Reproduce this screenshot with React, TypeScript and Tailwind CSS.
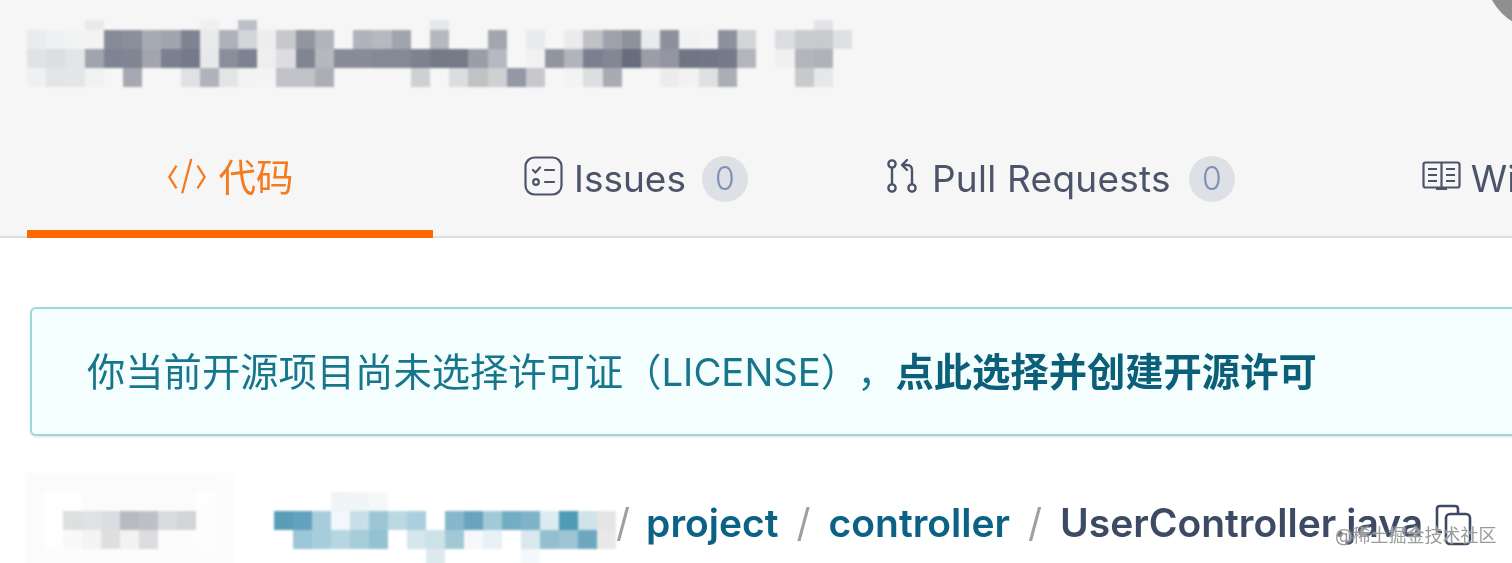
import React from "react";

const sans = "font-['Inter','Noto_Sans_CJK_SC',sans-serif]";

const titleRows = [
  { h: 10, c: ". . . e8e9ea . . . . . eeeff0 . bcbfc6 . . . . . . . . . e4e6e8 . . . . . . . . . . . . . . . . . . . e2e3e6" },
  { h: 19, c: "e9ebec eef0f1 f2f3f3 f3f3f4 858b98 8a8f9b a7abb4 a0a4ae 7e8492 e8eaec aeb1b9 d3d5d9 ededee c6c8cc 9296a0 b1b4ba . b0b3bb b7b9c0 a0a4ad . b5b8bd . . a3a6ae . e8e9ea . ebebec bfc1c5 9fa2ab 8e929c e9eaec 8e919c f2f2f3 f4f4f4 8d919d d3d5d8 . dcdde0 c9cbcf c8cace dfe0e3" },
  { h: 19, c: "e0e2e5 dcdee1 e2e4e6 a0a4ac 7e8493 7f8593 a2a5af 7b8090 747a8a e7e8ea 8a8e9c 7c8292 eeeeef dcdde0 808592 b5b8be 878b98 888c99 858997 858997 7d8290 757a89 767a89 9a9ea8 b6b9c1 . f1f1f2 9195a0 b2b4bb 7b8090 838794 676c7e 9b9ea8 9396a2 707586 727788 747a89 b3b5bc . f0f0f1 b3b5bc afb2b8" },
  { h: 19, c: "eff0f1 e2e4e6 e3e5e7 f1f1f2 . a5a8b2 . . e0e1e3 b0b3bb e2e4e5 f3f3f3 f4f4f4 c0c2c7 c0c2c7 acaeb4 . . . . cfd0d2 . dcdddf c0c2c6 ced0d2 9498a4 c6c8cc . f3f3f3 dcdee0 a8abb3 . . ececed f2f2f2 dfe0e2 abaeb5 . . . c7c9cc e6e7e8" },
];

const avatarRows = [
  { h: 19, c: "fbfbfb fbfbfb fbfbfb fbfbfb fbfbfb fbfbfb fbfbfb fbfbfb fbfbfb fbfbfb fcfcfc" },
  { h: 19, c: "fbfbfb fefefe fefefe fbfbfb fbfbfb fbfbfb fbfbfb fbfbfb fbfbfb fefefe fbfbfb" },
  { h: 19, c: "fbfbfb fefefe dedfe0 e0e1e2 dcdde0 b8bac2 bec0c6 dadbdd d3d4d6 fdfdfd fbfbfb" },
  { h: 19, c: "fbfbfb fefefe f9f9f9 f4f4f5 dedfe1 f2f2f3 dcdcde fcfcfc fcfcfc fdfdfd fbfbfb" },
  { h: 19, c: "fbfbfb fcfcfc fcfcfc fcfcfc fcfcfc fcfcfc fcfcfc fcfcfc fcfcfc fcfcfc fcfcfc" },
];

const repoRows = [
  { h: 19, c: ". . . eff4f6 f1f5f7 f5f8f9" },
  { h: 19, c: "5b9db8 62a2bc a7cddb f1f7fa c7dfe7 9cc6d6 bcd9e3 abcfdc . 85b8cc 68a4bd a1c9d8 73adc4 7eb3c8 dcebf0 4f9ab5 cfe3ea e5e5e5" },
  { h: 19, c: ". 9cc7d8 a6cddc b6d6e1 a6ccda 94c2d3 . d5e6ed cde1e9 a2c8d6 f6f9fb e8f1f5 . d9e7ee 94bfd0 9cc4d3 6ea8c0 e8e8e8" },
  { h: 19, c: ". . . . . . . . dce9ef . . . . f4f8fa" },
];

const Mosaic = ({ rows, className, cell = "w-[19px]" }: { rows: { h: number; c: string }[]; className?: string; cell?: string }) => (
  <div className={`flex flex-col shrink-0 ${className ?? ""}`}>
    {rows.map((row, i) => (
      <div key={i} className="flex">
        {row.c.split(" ").map((color, j) => (
          <div
            key={j}
            className={`${cell} shrink-0`}
            style={{ height: row.h, background: color === "." ? "transparent" : `#${color}` }}
          />
        ))}
      </div>
    ))}
  </div>
);

const Badge = () => (
  <span className="ml-[16px] flex h-[46px] w-[46px] items-center justify-center rounded-full bg-[#dde0e4] text-[32px] font-light text-[#7d91b4]">
    0
  </span>
);

const App: React.FC = () => {
  return (
    <div className={`relative h-[563px] w-[1512px] overflow-hidden bg-white blur-[0.5px] ${sans}`}>
      <div className="absolute left-[1484px] top-[-91px] h-[122px] w-[122px] rounded-full bg-[#8f8f8f]" />

      <section className="h-[238px] bg-[#f6f6f6] pt-[20px]">
        <Mosaic rows={titleRows} cell="w-[19.2px]" className="ml-[27px] blur-[1px]" />
        <div className="flex h-[151px] border-b-2 border-[#dedede] pl-[27px] text-[37px] text-[#4b5468]">
          <div className="flex h-[151px] w-[406px] shrink-0 items-center justify-center border-b-8 border-[#ff6a00] pt-[40px] text-[#f57a1e]">
            <svg className="mr-[12px] mt-[-4px] h-[42px] w-[40px]" viewBox="0 0 40 44" fill="none" stroke="currentColor" strokeWidth="2.4">
              <path d="M9 10 1.5 22 9 34M31 10l7.5 12L31 34M24.5 3 15 39" />
            </svg>
            <span className="text-[37.5px]">代码</span>
          </div>

          <div className="ml-[91px] flex h-[151px] shrink-0 items-center border-b-8 border-transparent pt-[40px]">
            <svg className="mr-[11px] mt-[-6px] h-[40px] w-[39px]" viewBox="0 0 39 40" fill="none" stroke="#4b5468" strokeWidth="2.2" strokeLinecap="round">
              <rect x="1.5" y="1.5" width="36" height="37" rx="9" />
              <path d="m9 14 2.5 2.5 4.5-5M21 14h9M21 26h9" />
              <circle cx="12" cy="26" r="2.8" />
            </svg>
            <span>Issues</span>
            <Badge />
          </div>

          <div className="ml-[138px] flex h-[151px] shrink-0 items-center border-b-8 border-transparent pt-[40px]">
            <svg className="mr-[14px] mt-[-6px] h-[36px] w-[32px]" viewBox="0 0 32 36" fill="none" stroke="#4b5468" strokeWidth="2.4" strokeLinecap="round" strokeLinejoin="round">
              <circle cx="6" cy="6" r="3.6" />
              <circle cx="6" cy="30" r="3.6" />
              <circle cx="26" cy="30" r="3.6" />
              <path d="M6 10v16M26 26V12q0-5-5-5h-4M21 2l-5 5 5 5" />
            </svg>
            <span className="mr-[2px] tracking-[0.25px]">Pull Requests</span>
            <Badge />
          </div>

          <div className="ml-[187px] flex h-[151px] shrink-0 items-center border-b-8 border-transparent pt-[40px]">
            <svg className="mr-[10px] mt-[-6px] h-[30px] w-[39px] shrink-0" viewBox="0 0 39 30" fill="none" stroke="#4b5468" strokeWidth="2.2">
              <rect x="1.5" y="1.5" width="36" height="25" rx="2" />
              <path d="M19.5 2v25M6 8h9M6 14h9M6 20h9M24 8h9M24 14h9M24 20h9M14 28h11" />
            </svg>
            <span>Wi</span>
          </div>
        </div>
      </section>

      <main className="pt-[69px]">
        <div className="ml-[30px] flex h-[129px] w-[1600px] items-center rounded-md border-2 border-[#9fd8da] bg-[#f4fefe] pl-[55px] pt-[2px] text-[38.3px] text-[#17768b] shadow-sm">
          <span className="whitespace-nowrap">你当前开源项目尚未选择许可证（LICENSE）</span>
          <span className="ml-[-2px] whitespace-nowrap">，</span>
          <span className="whitespace-nowrap font-bold text-[#0b5f78]">点此选择并创建开源许可</span>
        </div>

        <div className="ml-[25px] mt-[37px] flex items-start">
          <Mosaic rows={avatarRows} className="blur-[1px]" />
          <Mosaic rows={repoRows} className="ml-[40px] mt-[19px] blur-[1px]" />
          <div className="flex h-[100px] items-center whitespace-nowrap text-[39px] font-semibold text-[#0b6285]">
            <span className="font-normal text-[#9f9f9f]">/</span>
            <span className="ml-[16px]">project</span>
            <span className="ml-[18px] font-normal text-[#9f9f9f]">/</span>
            <span className="ml-[18px]">controller</span>
            <span className="ml-[18px] font-normal text-[#9f9f9f]">/</span>
            <span className="ml-[18px] text-[#3d4a63]">UserController.java</span>
            <svg className="ml-[12px] mt-[4px] h-[42px] w-[37px] shrink-0" viewBox="0 0 37 42" fill="none" stroke="#3d4a63" strokeWidth="2.6">
              <path d="M7 28H5q-3 0-3-3V5q0-3 3-3h15q3 0 3 3v4" />
              <rect x="11" y="10" width="24" height="30" rx="4" />
            </svg>
          </div>
        </div>
      </main>

      <div className="absolute left-[1335px] top-[522px] whitespace-nowrap text-[18px] text-[#9a9a9a] [text-shadow:0_0_2px_#fff]">
        @稀土掘金技术社区
      </div>
    </div>
  );
};

export default App;
